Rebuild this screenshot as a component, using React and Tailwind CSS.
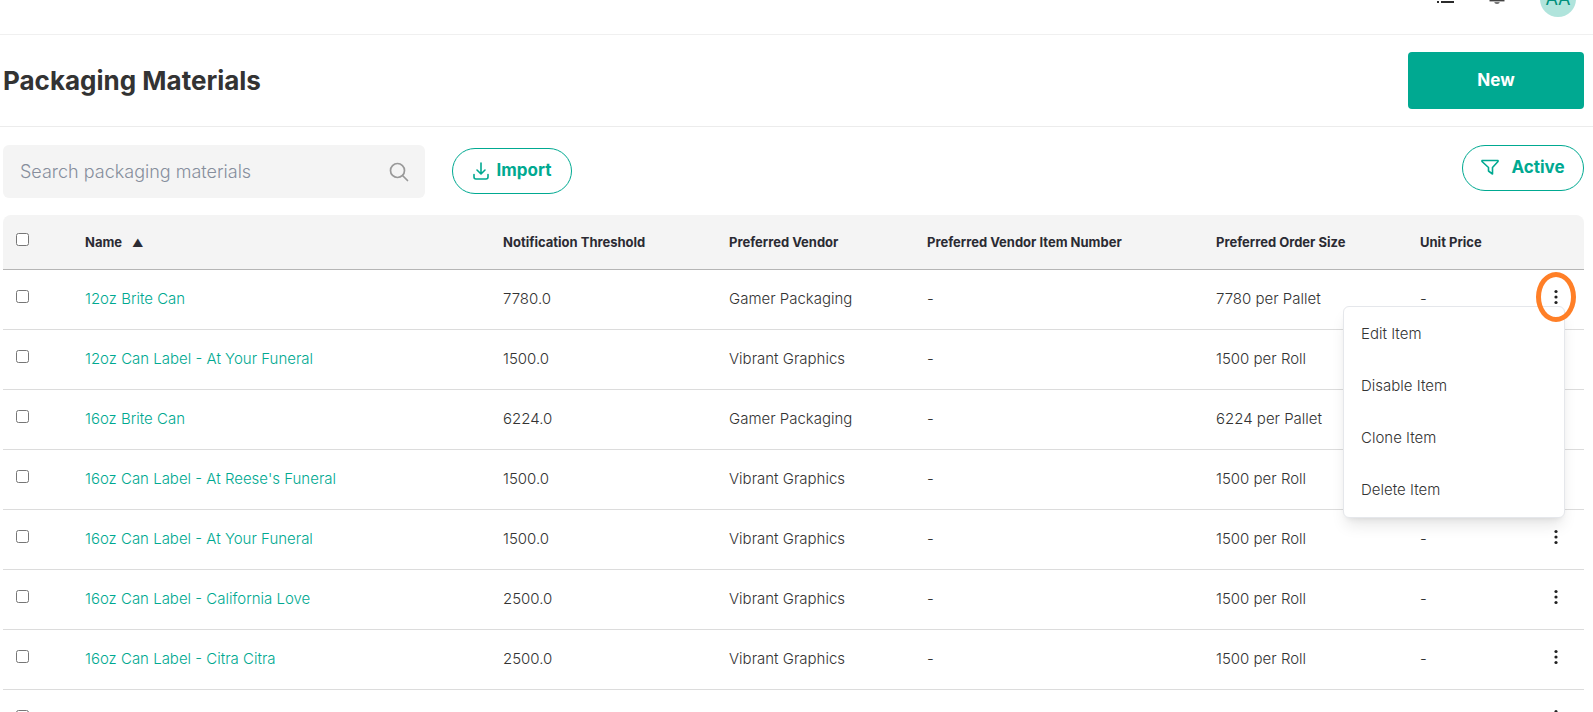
import React, { useState } from "react";

const columns = [
  { key: "name", label: "Name", width: "" },
  { key: "threshold", label: "Notification Threshold", width: "w-[226px]" },
  { key: "vendor", label: "Preferred Vendor", width: "w-[198px]" },
  { key: "itemNumber", label: "Preferred Vendor Item Number", width: "w-[289px]" },
  { key: "orderSize", label: "Preferred Order Size", width: "w-[204px]" },
  { key: "unitPrice", label: "Unit Price", width: "w-[108px]" },
];

const materials = [
  { name: "12oz Brite Can", threshold: "7780.0", vendor: "Gamer Packaging", orderSize: "7780 per Pallet" },
  { name: "12oz Can Label - At Your Funeral", threshold: "1500.0", vendor: "Vibrant Graphics", orderSize: "1500 per Roll" },
  { name: "16oz Brite Can", threshold: "6224.0", vendor: "Gamer Packaging", orderSize: "6224 per Pallet" },
  { name: "16oz Can Label - At Reese's Funeral", threshold: "1500.0", vendor: "Vibrant Graphics", orderSize: "1500 per Roll" },
  { name: "16oz Can Label - At Your Funeral", threshold: "1500.0", vendor: "Vibrant Graphics", orderSize: "1500 per Roll" },
  { name: "16oz Can Label - California Love", threshold: "2500.0", vendor: "Vibrant Graphics", orderSize: "1500 per Roll" },
  { name: "16oz Can Label - Citra Citra", threshold: "2500.0", vendor: "Vibrant Graphics", orderSize: "1500 per Roll" },
  { name: "16oz Can Label - Don't Hate The Player", threshold: "2500.0", vendor: "Vibrant Graphics", orderSize: "1500 per Roll" },
];

const actions = ["Edit Item", "Disable Item", "Clone Item", "Delete Item"];

const ListIcon = () => (
  <svg width="18" height="16" viewBox="0 0 18 16" fill="none" stroke="#2b2b2b" strokeWidth="2">
    <path d="M1 1h2M5 1h13M1 6h2M5 6h13M1 11h2M5 11h13" />
  </svg>
);

const BellIcon = () => (
  <svg width="16" height="24" viewBox="0 0 16 24" fill="none">
    <path d="M2.5 13V7a5.5 5.5 0 0 1 11 0v6" stroke="#444" strokeWidth="1.5" />
    <path d="M.5 13.7h15" stroke="#444" strokeWidth="1.4" />
    <path d="M5.5 15h5v1l-1.5 1h-2l-1.5-1z" fill="#777" />
  </svg>
);

const SearchIcon = () => (
  <svg width="20" height="20" viewBox="0 0 20 20" fill="none" stroke="#999" strokeWidth="1.7">
    <circle cx="8.5" cy="8.5" r="7" />
    <path d="M13.5 13.5l5 5" strokeLinecap="round" />
  </svg>
);

const ImportIcon = () => (
  <svg width="16" height="18" viewBox="0 0 16 18" fill="none" stroke="currentColor" strokeWidth="1.6" strokeLinecap="round" strokeLinejoin="round">
    <path d="M8 1v10.5M4 8l4 4 4-4" />
    <path d="M1 12.5v2.5a2 2 0 0 0 2 2h10a2 2 0 0 0 2-2v-2.5" />
  </svg>
);

const FilterIcon = () => (
  <svg width="18" height="18" viewBox="0 0 18 18" fill="none" stroke="currentColor" strokeWidth="1.6" strokeLinejoin="round">
    <path d="M1 1.5h16v1l-5.5 6v6.5l-4-3v-3.5l-6.5-6z" />
  </svg>
);

const DotsIcon = () => (
  <svg width="4" height="16" viewBox="0 0 4 16" fill="#222">
    <circle cx="2" cy="2.5" r="1.6" />
    <circle cx="2" cy="8" r="1.6" />
    <circle cx="2" cy="13.5" r="1.6" />
  </svg>
);

const ItemMenu = () => (
  <div
    role="menu"
    className="absolute top-9 right-[19px] z-10 w-[222px] rounded-md border border-gray-200 bg-white py-px shadow-lg"
  >
    {actions.map((action) => (
      <button
        key={action}
        role="menuitem"
        className="block h-[52px] w-full cursor-pointer px-[17px] text-left text-[15px] font-light text-[#333]"
      >
        {action}
      </button>
    ))}
  </div>
);

const Checkbox = ({ label }) => (
  <input type="checkbox" aria-label={label} className="mb-1.5 ml-[13px] block size-[13px]" />
);

const MaterialsTable = ({ data }) => {
  const [openRow, setOpenRow] = useState(0);

  return (
    <table className="w-full table-fixed border-separate border-spacing-0 text-left">
      <thead>
        <tr className="h-[55px] text-[13px] text-[#2b2b33]">
          <th className="w-[82px] rounded-tl-lg border-b border-[#b5b5b5] bg-[#f4f4f4]">
            <Checkbox label="Select all" />
          </th>
          {columns.map((column) => (
            <th
              key={column.key}
              className={`${column.width} border-b border-[#b5b5b5] bg-[#f4f4f4] pt-0.5 font-bold whitespace-nowrap`}
            >
              {column.label}
              {column.key === "name" && <span className="ml-2.5 text-[11px]">▲</span>}
            </th>
          ))}
          <th className="w-[56px] rounded-tr-lg border-b border-[#b5b5b5] bg-[#f4f4f4]" />
        </tr>
      </thead>
      <tbody>
        {data.map((row, index) => (
          <tr key={row.name} className="h-[60px] text-[15px] font-light text-[#333]">
            <td className="border-b border-[#dcdcdc]">
              <Checkbox label={`Select ${row.name}`} />
            </td>
            {columns.map((column) => (
              <td key={column.key} className="border-b border-[#dcdcdc] whitespace-nowrap">
                {column.key === "name" ? (
                  <a href="#" className="text-[#00a991]">{row.name}</a>
                ) : (
                  row[column.key] ?? "-"
                )}
              </td>
            ))}
            <td className="relative border-b border-[#dcdcdc]">
              <button
                aria-label={`Actions for ${row.name}`}
                onClick={() => setOpenRow(openRow === index ? null : index)}
                className="mb-1.5 ml-[18px] flex h-8 w-5 cursor-pointer items-center justify-center"
              >
                <DotsIcon />
              </button>
              {openRow === index && (
                <>
                  <ItemMenu />
                  {/* Highlight ring around the open menu's trigger */}
                  <span className="pointer-events-none absolute top-0.5 left-2 z-20 h-[50px] w-10 rounded-[50%] border-5 border-[#ff7f27]" />
                </>
              )}
            </td>
          </tr>
        ))}
      </tbody>
    </table>
  );
};

const App = () => {
  return (
    <div className="h-screen overflow-hidden bg-white font-['Inter',sans-serif] text-[#333]">
      <header className="-mt-[37px] flex h-[72px] items-center justify-end gap-[35px] border-b border-[#f0f0f0] pr-[17px]">
        <button aria-label="Lists"><ListIcon /></button>
        <button aria-label="Notifications"><BellIcon /></button>
        <span className="flex size-9 items-center justify-center rounded-full bg-[#b0e4dc] text-lg text-[#00907c]">
          AA
        </span>
      </header>

      <div className="flex h-[92px] items-center justify-between border-b border-[#ececec] pr-[9px] pl-[3px]">
        <h1 className="text-[26px] font-bold">Packaging Materials</h1>
        <button className="h-[57px] w-44 cursor-pointer rounded bg-[#00a991] text-[17px] font-bold text-white">
          New
        </button>
      </div>

      <main className="pt-[18px] pr-[9px] pl-[3px]">
        <div className="mb-[17px] flex items-start">
          <label className="flex h-[53px] w-[422px] items-center rounded-md bg-[#f4f4f4] pr-4 pl-[17px]">
            <input
              type="text"
              aria-label="Search packaging materials"
              placeholder="Search packaging materials"
              className="min-w-0 flex-1 bg-transparent text-lg font-light outline-none placeholder:text-[#868e9c]"
            />
            <SearchIcon />
          </label>
          <button className="mt-[3px] ml-[27px] flex h-[46px] w-[120px] cursor-pointer items-center justify-center gap-2 rounded-full border border-[#00a991] text-[17px] font-bold text-[#00a991]">
            <ImportIcon />
            Import
          </button>
          <button className="ml-auto flex h-[46px] w-[122px] cursor-pointer items-center justify-center gap-3 rounded-full border border-[#00a991] text-[17px] font-bold text-[#00a991]">
            <FilterIcon />
            Active
          </button>
        </div>

        <MaterialsTable data={materials} />
      </main>
    </div>
  );
};

export default App;
